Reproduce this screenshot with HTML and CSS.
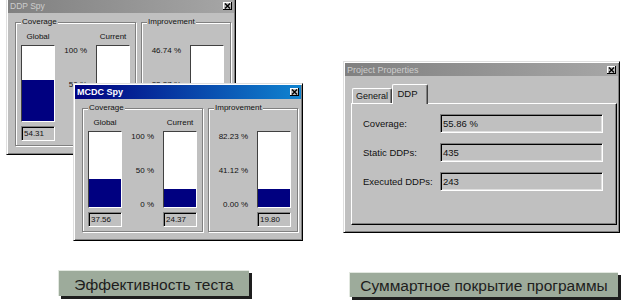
FILE: index.html
```html
<!DOCTYPE html>
<html>
<head>
<meta charset="utf-8">
<title>Spy</title>
<link rel="stylesheet" href="styles.css">
</head>
<body>
<div class="page">
  <section class="fig fig-left">
    <div class="stage">
      <div class="win spy spy-ddp">
        <div class="titlebar inactive">
          <span class="title">DDP Spy</span>
          <span class="close"><svg viewBox="0 0 7 6" width="7" height="6"><path d="M1 0.5 L6 5.5 M6 0.5 L1 5.5" stroke="#000" stroke-width="1.4" fill="none"/></svg></span>
        </div>
        <div class="spy-body">
          <div class="group cov">
            <span class="legend">Coverage</span>
            <span class="head h1">Global</span>
            <span class="head h2">Current</span>
            <div class="bar b1"><div class="fill" style="height:54.31%"></div></div>
            <div class="scale"><span>100 %</span><span>50 %</span><span>0 %</span></div>
            <div class="bar b2"><div class="fill" style="height:30.12%"></div></div>
            <div class="value v1">54.31</div>
            <div class="value v2">30.12</div>
          </div>
          <div class="group imp">
            <span class="legend">Improvement</span>
            <div class="scale"><span>46.74 %</span><span>23.37 %</span><span>0.00 %</span></div>
            <div class="bar"><div class="fill" style="height:42%"></div></div>
            <div class="value">19.63</div>
          </div>
        </div>
      </div>

      <div class="win spy spy-mcdc">
        <div class="titlebar active">
          <span class="title">MCDC Spy</span>
          <span class="close"><svg viewBox="0 0 7 6" width="7" height="6"><path d="M1 0.5 L6 5.5 M6 0.5 L1 5.5" stroke="#000" stroke-width="1.4" fill="none"/></svg></span>
        </div>
        <div class="spy-body">
          <div class="group cov">
            <span class="legend">Coverage</span>
            <span class="head h1">Global</span>
            <span class="head h2">Current</span>
            <div class="bar b1"><div class="fill" style="height:37.56%"></div></div>
            <div class="scale"><span>100 %</span><span>50 %</span><span>0 %</span></div>
            <div class="bar b2"><div class="fill" style="height:24.37%"></div></div>
            <div class="value v1">37.56</div>
            <div class="value v2">24.37</div>
          </div>
          <div class="group imp">
            <span class="legend">Improvement</span>
            <div class="scale"><span>82.23 %</span><span>41.12 %</span><span>0.00 %</span></div>
            <div class="bar"><div class="fill" style="height:24.08%"></div></div>
            <div class="value">19.80</div>
          </div>
        </div>
      </div>
    </div>
    <div class="caption">Эффективность теста</div>
  </section>

  <section class="fig fig-right">
    <div class="stage">
      <div class="win pp">
        <div class="titlebar inactive">
          <span class="title">Project Properties</span>
          <span class="close"><svg viewBox="0 0 7 6" width="7" height="6"><path d="M1 0.5 L6 5.5 M6 0.5 L1 5.5" stroke="#000" stroke-width="1.4" fill="none"/></svg></span>
        </div>
        <div class="pp-body">
          <div class="tabs">
            <div class="tab general">General</div>
            <div class="tab ddp">DDP</div>
          </div>
          <div class="panel">
            <div class="row"><span class="lbl">Coverage:</span><span class="field">55.86 %</span></div>
            <div class="row"><span class="lbl">Static DDPs:</span><span class="field">435</span></div>
            <div class="row"><span class="lbl">Executed DDPs:</span><span class="field">243</span></div>
          </div>
        </div>
      </div>
    </div>
    <div class="caption">Суммартное покрытие программы</div>
  </section>
</div>
</body>
</html>
```

FILE: styles.css
```css
* { box-sizing: border-box; margin: 0; padding: 0; }
html, body { width: 625px; height: 302px; overflow: hidden; background: #fff; }
body { font-family: "Liberation Sans", Arial, sans-serif; color: #000; }

.page { display: flex; width: 625px; height: 302px; }
.fig { display: flex; flex-direction: column; }
.fig-left { width: 330px; }
.fig-right { flex: 1; }
.stage { position: relative; height: 270px; }
.fig-right .stage { height: 272px; }

.caption {
  background: #9dab9b;
  box-shadow: 3px 3px 0 #1e1e1e;
  border-top: 1px solid #e2e8e0;
  border-left: 1px solid #e2e8e0;
  font-size: 15.5px;
  color: #1d1d1d;
  display: flex;
  align-items: center;
  justify-content: center;
  padding-top: 2px;
}
.fig-left .caption { margin-left: 58px; width: 191px; height: 26px; }
.fig-right .caption { margin-left: 19px; width: 269px; height: 25px; }

/* windows */
.win {
  position: absolute;
  background: #c0c0c0;
  border: 1px solid;
  border-color: #dfdfdf #000 #000 #dfdfdf;
  box-shadow: inset 1px 1px #fff, inset -1px -1px #808080;
  padding: 1px;
  display: flex;
  flex-direction: column;
}
.titlebar {
  height: 14px;
  flex: none;
  display: flex;
  align-items: center;
  justify-content: space-between;
  padding: 0 2px 0 2px;
  white-space: nowrap;
}
.titlebar.active {
  background: linear-gradient(90deg, #000080, #1084d0);
  color: #fff;
  font-weight: bold;
  font-size: 9px;
}
.titlebar.inactive {
  background: linear-gradient(90deg, #808080, #a6a6a6);
  color: #cdcdcd;
  font-size: 8.5px;
}
.close {
  width: 9px;
  height: 8px;
  background: #c0c0c0;
  box-shadow: inset -1px -1px #000, inset 1px 1px #fff;
  display: flex;
  align-items: center;
  justify-content: center;
}
.close svg { display: block; }

/* spy windows */
.spy { width: 230px; height: 158px; }
.spy-ddp { left: 6px; top: -3px; }
.spy-mcdc { left: 73px; top: 83px; }
.spy-body {
  display: flex;
  gap: 5px;
  padding: 9px 3px 7px 7px;
  flex: 1;
  font-size: 8px;
  color: #111;
}
.group {
  position: relative;
  height: 124px;
  border: 1px solid #808080;
  box-shadow: inset 1px 1px #fff, 1px 1px #fff;
  display: grid;
  grid-template-rows: 10px 77px 16px;
  row-gap: 3px;
}
.legend {
  position: absolute;
  left: 5px;
  top: -6px;
  background: #c0c0c0;
  padding: 0 1px;
  line-height: 10px;
}
.cov {
  width: 121px;
  grid-template-columns: 34px 1fr 34px;
  padding: 9px 5px 0 5px;
}
.imp {
  width: 90px;
  grid-template-columns: 1fr 34px;
  padding: 9px 6px 0 0;
}
.head { text-align: center; line-height: 10px; grid-row: 1; }
.h1 { grid-column: 1; }
.h2 { grid-column: 3; }
.cov .b1 { grid-column: 1; grid-row: 2; }
.cov .scale { grid-column: 2; grid-row: 2; }
.cov .b2 { grid-column: 3; grid-row: 2; }
.cov .v1 { grid-column: 1; grid-row: 3; }
.cov .v2 { grid-column: 3; grid-row: 3; }
.imp .scale { grid-column: 1; grid-row: 2; }
.imp .bar { grid-column: 2; grid-row: 2; }
.imp .value { grid-column: 2; grid-row: 3; }

.bar {
  background: #fff;
  border: 1px solid;
  border-color: #404040 #fff #fff #404040;
  display: flex;
  flex-direction: column;
  justify-content: flex-end;
}
.fill { background: #000080; }
.scale {
  display: flex;
  flex-direction: column;
  justify-content: space-between;
  height: 80px;
  margin-bottom: -3px;
  text-align: right;
  padding-right: 9px;
  line-height: 12px;
  white-space: nowrap;
}
.value {
  margin-top: 1px;
  border: 1px solid;
  border-color: #808080 #fff #fff #808080;
  box-shadow: inset 1px 1px #000;
  padding-left: 2px;
  line-height: 14px;
}

/* project properties */
.pp { left: 13px; top: 61px; width: 277px; height: 172px; }
.pp .titlebar { height: 13px; font-size: 9px; }
.pp-body {
  flex: 1;
  display: flex;
  flex-direction: column;
  padding: 8px 1px 6px 6px;
  font-size: 9.5px;
  color: #111;
}
.tabs {
  display: flex;
  align-items: flex-end;
  padding-left: 1px;
  height: 20px;
  margin-bottom: -1px;
  position: relative;
  z-index: 1;
  flex: none;
}
.tab {
  background: #c0c0c0;
  border: 1px solid;
  border-color: #fff #404040 transparent #fff;
  border-bottom: none;
  border-radius: 2px 2px 0 0;
  box-shadow: inset -1px 0 #808080;
  display: flex;
  align-items: center;
  justify-content: center;
}
.tab.general { width: 40px; height: 15px; margin-bottom: 1px; font-size: 9px; }
.tab.ddp { width: 36px; height: 20px; padding-right: 5px; padding-bottom: 2px; }
.panel {
  flex: 1;
  border: 1px solid;
  border-color: #fff #000 #000 #fff;
  box-shadow: inset -1px -1px #808080;
  padding: 10px 0 0 11px;
  display: flex;
  flex-direction: column;
  gap: 10px;
}
.row { display: flex; align-items: center; height: 19px; }
.lbl { width: 77px; white-space: nowrap; }
.field {
  width: 163px;
  height: 19px;
  border: 1px solid;
  border-color: #808080 #fff #fff #808080;
  box-shadow: inset 1px 1px #000, inset -1px -1px #dfdfdf;
  padding-left: 2px;
  display: flex;
  align-items: center;
}
```
